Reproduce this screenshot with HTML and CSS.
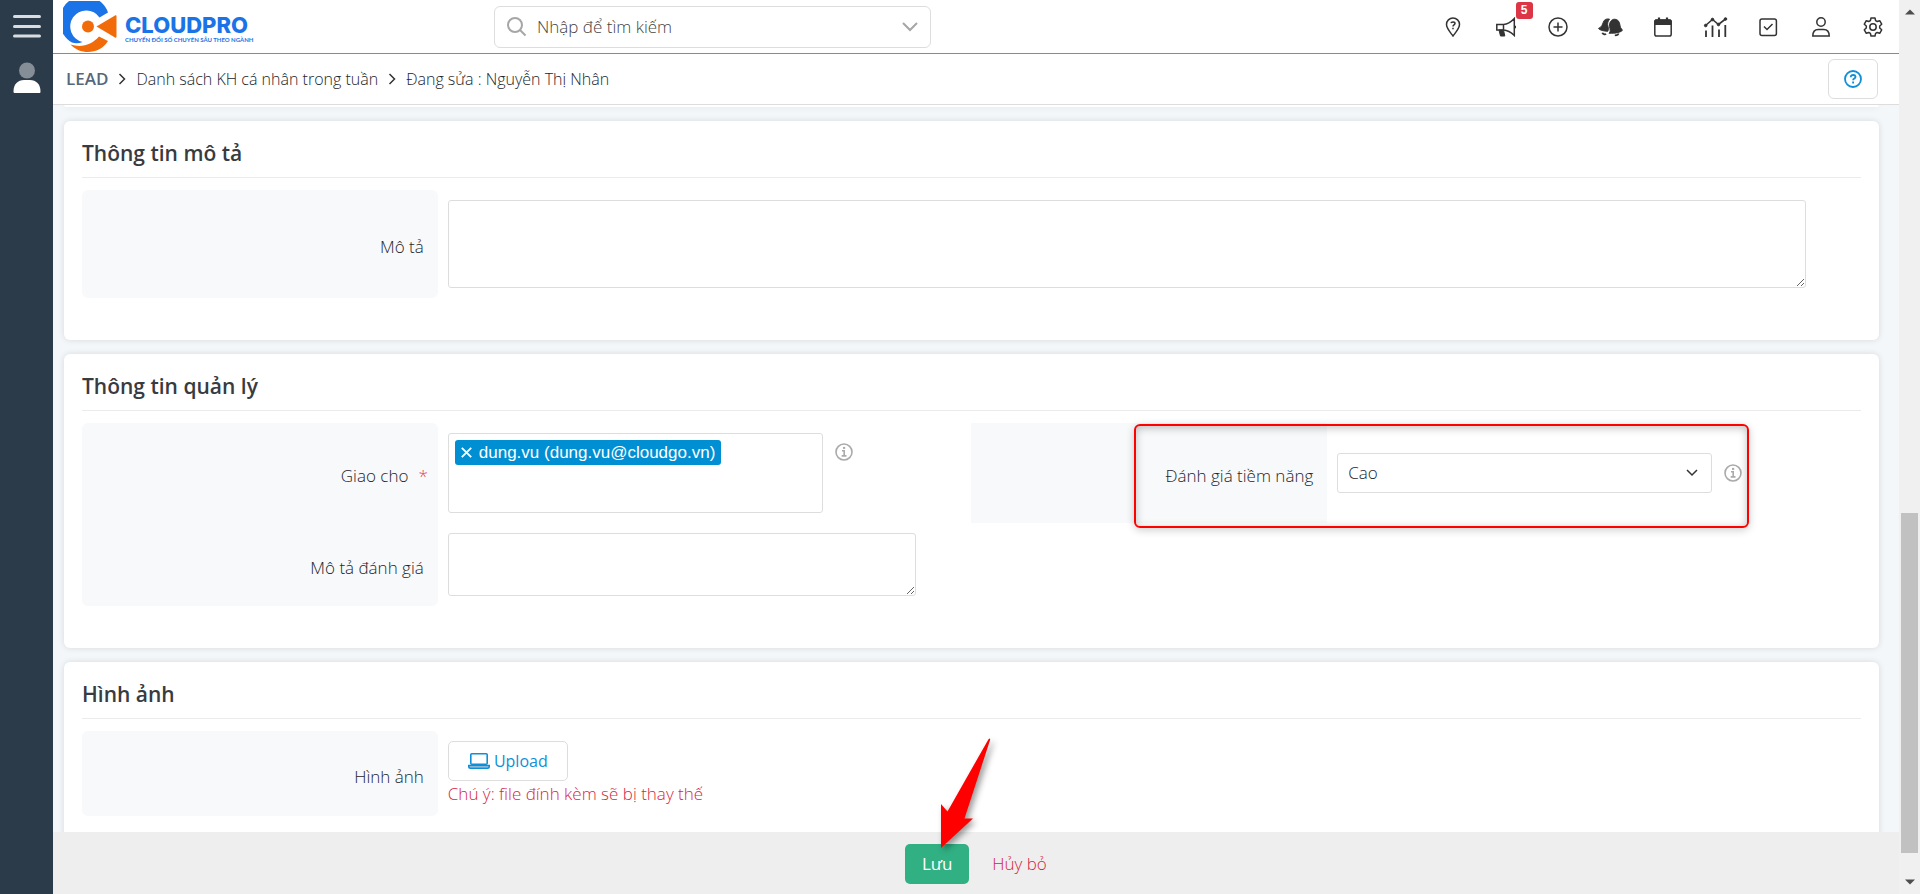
FILE: index.html
```html
<!DOCTYPE html>
<html lang="vi">
<head>
<meta charset="utf-8">
<title>Đang sửa : Nguyễn Thị Nhân</title>
<link rel="stylesheet" href="styles.css">
</head>
<body>
<div class="app">
  <nav class="sidebar" aria-label="Menu">
    <button class="side-btn" aria-label="Menu">
      <svg width="28" height="24" viewBox="0 0 28 24" fill="none" stroke="#d9dce0" stroke-width="3" stroke-linecap="round"><path d="M1.500 2.500h25M1.500 12.500h25M1.500 22h25"/></svg>
    </button>
    <button class="side-btn" aria-label="Tài khoản">
      <svg width="28" height="32" viewBox="0 0 28 32"><circle cx="14" cy="8.500" r="8" fill="#858d96"/><path d="M.500 29.500C.500 22 5 18 11 18h6c6 0 10.500 4 10.500 11.500 0 1-.500 1.500-1.500 1.500H2c-1 0-1.500-.500-1.500-1.500z" fill="#fff"/></svg>
    </button>
  </nav>

  <div class="page">
    <header class="topbar">
      <a class="logo" href="#" aria-label="CloudPro">
        <svg width="54" height="52" viewBox="0 0 54 52">
          <path d="M45 11.500A25 25 0 1 0 9 41.500c3.500 1.200 7 1 10.500-.500A16 16 0 1 1 36.500 16.500z" fill="#1a74e8"/>
          <path d="M7.500 43.500c11 3.500 21 .500 28.500-8l9 4.500C37 53.500 17.500 54.500 7.500 43.500z" fill="#f26b0b"/>
          <circle cx="25" cy="25.500" r="6" fill="#f26b0b"/>
          <path d="M33.500 25.500 52 14.500c1-.500 1.500 0 1.500 1v20c0 1-.500 1.500-1.500 1z" fill="#f26b0b"/>
        </svg>
        <span class="logo-text"><b class="logo-name">CLOUDPRO</b><span class="logo-sub">CHUYỂN ĐỔI SỐ CHUYÊN SÂU THEO NGÀNH</span></span>
      </a>
      <div class="search">
        <svg width="20" height="20" viewBox="0 0 20 20" fill="none" stroke="#a6a6a6" stroke-width="2"><circle cx="8" cy="8" r="7"/><path d="M13 13l5.500 5.500"/></svg>
        <input class="search-input" type="text" placeholder="Nhập để tìm kiếm" aria-label="Tìm kiếm">
        <button class="plain" aria-label="Mở rộng"><svg width="16" height="10" viewBox="0 0 16 10" fill="none" stroke="#a6a6a6" stroke-width="2"><path d="M1 1l7 7 7-7"/></svg></button>
      </div>
      <div class="tools">
        <button class="tool" aria-label="Vị trí"><svg viewBox="0 0 20 20" class="ico"><path d="M10 19C7 15 3.500 11.200 3.500 7.500a6.500 6.500 0 0 1 13 0C16.500 11.200 13 15 10 19z"/><path d="M8 6.200C8.200 4.500 12 4.300 12 6.500c0 1.400-2 1.300-2 2.900M10 10.800v1.500"/></svg></button>
        <button class="tool" aria-label="Thông báo"><svg viewBox="0 0 20 20" class="ico"><path d="M.800 7.500h6.700v5.500H.800zM7.500 7.500C11.500 7.300 15 5 18.300 1.500v17C15 15.300 11.500 13.200 7.500 13z"/><path d="M19 8.800v2.500" stroke-width="2"/><path d="M3 13h4.500l1.300 6H4.500z" class="solid"/></svg><span class="badge">5</span></button>
        <button class="tool" aria-label="Thêm"><svg viewBox="0 0 20 20" class="ico"><circle cx="10" cy="10" r="9"/><path d="M10 5.500v9M5.500 10h9"/></svg></button>
        <button class="tool" aria-label="Chuông"><svg viewBox="0 0 26 20" class="ico wide"><path d="M.500 11.500c3.500-1.500 4-4 5-6.500C6.500 2 9 1.200 12 1.800c-2 2.700-2.500 5-1.500 7.700.500 2 .500 2.700-.3 5C6 14.200 2 13.500.500 11.500z" class="solid"/><path d="M11.500 16.500c2-1.500 1-4 .5-7-.5-4 1.500-7.300 5-7.600 3.500-.2 5.200 2.500 5.700 5.300.4 2.500.5 4 2.800 5.800-1 2.500-7 3.700-14 3.500z" class="solid"/><path d="M4.500 16c.5 1.500 2.500 2 4 1.300M17.500 18.500c2 .3 3.500-.2 4-1.700" stroke-width="1.800"/></svg></button>
        <button class="tool" aria-label="Lịch"><svg viewBox="0 0 20 20" class="ico"><rect x="1.800" y="3" width="16.400" height="16" rx="1.800"/><path d="M2 3h16v4.500H2z" class="solid"/><path d="M6 .500v3M14 .500v3" stroke-width="2.200"/></svg></button>
        <button class="tool" aria-label="Báo cáo"><svg viewBox="0 0 24 20" class="ico wide"><path d="M2 8.500l7-6 6 5 7-5.500" stroke-width="1.600"/><g class="solid"><circle cx="2.200" cy="8.500" r="1.300"/><circle cx="9" cy="2.500" r="1.300"/><circle cx="15" cy="7.500" r="1.300"/><circle cx="22" cy="2" r="1.300"/></g><path d="M2.500 13.500V20M9 8.500V20M15.500 12.500V20M21.800 8V20" stroke-width="1.800"/></svg></button>
        <button class="tool" aria-label="Công việc"><svg viewBox="0 0 20 20" class="ico"><rect x="2" y="2" width="16.400" height="16.400" rx="2"/><path d="M6 9.500l3 3 5.500-5.500"/></svg></button>
        <button class="tool" aria-label="Người dùng"><svg viewBox="0 0 20 20" class="ico"><circle cx="10" cy="5" r="4.200"/><path d="M1.800 19c0-4.500 2.500-6.500 5.500-6.500h5.400c3 0 5.500 2 5.500 6.500z"/></svg></button>
        <button class="tool" aria-label="Cài đặt"><svg viewBox="0 0 20 20" class="ico"><circle cx="10" cy="10" r="3.200"/><path d="M8 1h4l.6 2.600 1.600.9 2.500-.8 2 3.500-2 1.800v2l2 1.800-2 3.500-2.500-.8-1.600.9L12 19H8l-.6-2.600-1.600-.9-2.500.8-2-3.500 2-1.800V9l-2-1.800 2-3.500 2.500.8 1.600-.9z" stroke-linejoin="round"/></svg></button>
      </div>
    </header>

    <div class="crumbbar">
      <nav class="crumbs" aria-label="Breadcrumb">
        <a class="crumb-module" href="#">LEAD</a>
        <svg class="sep" viewBox="0 0 8 12"><path d="M1.500 1l5 5-5 5"/></svg>
        <a class="crumb" href="#">Danh sách KH cá nhân trong tuần</a>
        <svg class="sep" viewBox="0 0 8 12"><path d="M1.500 1l5 5-5 5"/></svg>
        <span class="crumb">Đang sửa : Nguyễn Thị Nhân</span>
      </nav>
      <button class="help" aria-label="Trợ giúp"><svg width="18" height="18" viewBox="0 0 18 18" fill="none" stroke="#0f8fd6" stroke-width="1.800"><circle cx="9" cy="9" r="8"/><path d="M6.700 7.300c0-3.200 4.800-2.900 4.800-.3 0 1.600-2.400 1.600-2.400 3.200M9.100 11.600v1.800"/></svg></button>
    </div>

    <main class="content">
      <section class="card card-tail"></section>

      <section class="card">
        <h2 class="card-title">Thông tin mô tả</h2>
        <div class="row row-wide">
          <label class="label alone" for="desc">Mô tả</label>
          <div class="field"><textarea class="box area-lg" id="desc"></textarea></div>
        </div>
      </section>

      <section class="card">
        <h2 class="card-title">Thông tin quản lý</h2>
        <div class="row row-half">
          <label class="label first" for="owner">Giao cho <span class="req">*</span></label>
          <div class="field line">
            <div class="box tags">
              <span class="tag"><button class="tag-x" aria-label="Xóa"><svg width="11" height="11" viewBox="0 0 11 11" stroke="#fff" stroke-width="1.800"><path d="M.800.800l9.400 9.400M10.200.800L.800 10.200"/></svg></button>dung.vu (dung.vu@cloudgo.vn)</span>
              <input class="tag-input" id="owner" type="text">
            </div>
            <svg class="info" viewBox="0 0 18 18"><circle cx="9" cy="9" r="8"/><path d="M7 7.800h2.200v5M6.700 12.900h4.800"/><path d="M8 4.900h2.200" stroke-width="2"/></svg>
          </div>
          <label class="label" for="rating">Đánh giá tiềm năng</label>
          <div class="field line middle">
            <div class="select-wrap">
              <select class="box select" id="rating"><option>Cao</option></select>
              <svg class="select-arrow" width="12" height="8" viewBox="0 0 12 8"><path d="M1 1l5 5 5-5"/></svg>
            </div>
            <svg class="info" viewBox="0 0 18 18"><circle cx="9" cy="9" r="8"/><path d="M7 7.800h2.200v5M6.700 12.900h4.800"/><path d="M8 4.900h2.200" stroke-width="2"/></svg>
          </div>
          <label class="label last" for="note">Mô tả đánh giá</label>
          <div class="field"><textarea class="box area-sm" id="note"></textarea></div>
          <div class="highlight"></div>
        </div>
      </section>

      <section class="card">
        <h2 class="card-title">Hình ảnh</h2>
        <div class="row row-wide">
          <span class="label alone">Hình ảnh</span>
          <div class="field">
            <button class="upload"><svg width="22" height="16" viewBox="0 0 22 16" fill="none" stroke="#0f8fd6" stroke-width="1.600"><rect x="2.800" y=".800" width="16.400" height="10.500" rx="1"/><path d="M.800 12.500h20.400v1c0 1-.800 1.700-1.800 1.700H2.600c-1 0-1.800-.700-1.800-1.700z" fill="#b5c7d6"/></svg>Upload</button>
            <p class="note">Chú ý: file đính kèm sẽ bị thay thế</p>
          </div>
        </div>
      </section>
    </main>

    <footer class="actions">
      <div class="save-wrap">
        <button class="save">Lưu</button>
        <svg class="arrow" width="50" height="112" viewBox="0 0 50 112"><path d="M49.500.500c.8 0 .8.800.5 1.800L24.500 80.500H33L1 110V66l6.500 7.500L48.500 1.200z" fill="#f00"/></svg>
      </div>
      <a class="cancel" href="#">Hủy bỏ</a>
    </footer>
  </div>

  <div class="scroll" aria-hidden="true">
    <svg width="10" height="6" viewBox="0 0 10 6"><path d="M0 5.500L5 .500l5 5z" fill="#4d4d4d"/></svg>
    <div class="track"><div class="thumb"></div></div>
    <svg width="10" height="6" viewBox="0 0 10 6"><path d="M0 .500l5 5 5-5z" fill="#4d4d4d"/></svg>
  </div>
</div>
</body>
</html>
```
FILE: styles.css
```css
* { box-sizing: border-box; }
body {
  margin: 0;
  font-family: "Open Sans", "Noto Sans", sans-serif;
  font-size: 17px;
  line-height: 24px;
  font-weight: 300;
  color: #22262c;
}
button { border: 0; background: none; padding: 0; font: inherit; color: inherit; cursor: pointer; }
a { color: inherit; text-decoration: none; }
svg { display: block; flex: none; }

.app { display: flex; height: 100vh; overflow: hidden; background: #f3f7fa; }

.sidebar { flex: none; width: 53px; padding-top: 14px; background: #2c3b49; display: flex; flex-direction: column; align-items: center; gap: 24px; }
.page { flex: 1; min-width: 0; display: flex; flex-direction: column; }

.topbar { flex: none; display: flex; align-items: center; height: 54px; padding: 0 16px 0 10px; background: #fff; border-bottom: 1px solid #44b07c; }
.logo { display: flex; align-items: center; gap: 8px; width: 431px; color: #1a74e8; }
.logo-text { display: flex; flex-direction: column; padding-top: 6px; }
.logo-name { font-family: Inter, sans-serif; font-size: 22px; line-height: 20px; font-weight: 800; }
.logo-sub { font-family: Lato, sans-serif; font-size: 6px; line-height: 10px; font-weight: 700; white-space: nowrap; }
.search { display: flex; align-items: center; gap: 10px; width: 437px; height: 42px; padding: 0 12px; border: 1px solid #ddd; border-radius: 6px; }
.search-input { flex: 1; min-width: 0; padding: 0; border: 0; outline: 0; font: inherit; background: none; }
.search-input::placeholder { color: #444; }
.tools { display: flex; justify-content: space-between; width: 440px; margin-left: auto; }
.tool { position: relative; display: flex; justify-content: center; width: 20px; height: 20px; }
.ico { width: 20px; height: 20px; fill: none; stroke: #333; stroke-width: 1.5; }
.ico.wide { width: 25px; }
.ico .solid { fill: #333; stroke-width: 1; }
.badge { position: absolute; left: 20px; top: -15px; width: 17px; height: 17px; border-radius: 3px; background: #dc3545; color: #fff; font: 700 12px/16px "Liberation Sans", sans-serif; text-align: center; }

.crumbbar { flex: none; display: flex; align-items: center; justify-content: space-between; height: 51px; padding: 0 21px 0 13px; background: #fff; border-bottom: 1px solid #ddd; }
.crumbs { display: flex; align-items: center; gap: 10px; }
.crumb-module { font-size: 17px; font-weight: 600; color: #56677a; }
.crumb { font-size: 16px; }
.sep { width: 8px; height: 12px; fill: none; stroke: #333; stroke-width: 1.5; }
.help { display: flex; align-items: center; justify-content: center; width: 50px; height: 40px; border: 1px solid #ddd; border-radius: 6px; }

.content { flex: 1; min-height: 0; overflow: hidden; display: flex; flex-direction: column; gap: 14px; padding: 0 20px 0 11px; }
.card { flex: none; padding: 16px 18px 42px; background: #fff; border-radius: 6px; box-shadow: 0 0 6px rgba(0, 0, 0, .12); }
.card-tail { height: 2px; padding: 0; border-radius: 0 0 6px 6px; }
.card-title { margin: 0 0 12px; padding-bottom: 8px; border-bottom: 1px solid #ebebeb; font-size: 21px; line-height: 32px; font-weight: 600; color: #383b40; }

.row { display: grid; position: relative; }
.row-wide { grid-template-columns: 20% 80%; }
.row-half { grid-template-columns: 20% 30% 20% 30%; }
.label { display: flex; align-items: center; justify-content: flex-end; padding: 6px 14px 0 0; background: #f8f9fb; }
.label.alone { border-radius: 6px; }
.label.first { border-radius: 6px 6px 0 0; padding-right: 10px; }
.label.last { border-radius: 0 0 6px 6px; }
.req { margin-left: 10px; color: #e04358; }
.field { padding: 10px; }
.line { display: flex; align-items: flex-start; gap: 12px; }
.line.middle { align-items: center; }
.line:not(.middle) .info { margin-top: 10px; }
.info { width: 18px; height: 18px; fill: none; stroke: #aaa; stroke-width: 1.6; }

.box { display: block; border: 1px solid #ddd; border-radius: 3px; background: #fff; font: inherit; color: inherit; outline: 0; resize: none; }
textarea.box { width: calc(100% - 45px); resize: vertical; }
.area-lg { height: 88px; }
.area-sm { height: 63px; }
.tags { width: 375px; height: 80px; padding: 6px; }
.tag { display: flex; align-items: center; gap: 7px; width: fit-content; height: 25px; padding: 0 6px; border-radius: 3px; background: #008fd3; color: #fff; font: 400 17px/25px "Liberation Sans", sans-serif; white-space: nowrap; }
.tag-input { width: 100%; border: 0; outline: 0; padding: 0; }
.select-wrap { position: relative; width: 375px; }
.select { width: 100%; height: 40px; padding: 0 10px; appearance: none; }
.select-arrow { position: absolute; right: 14px; top: 16px; fill: none; stroke: #333; stroke-width: 1.5; pointer-events: none; }
.highlight { position: absolute; left: calc(50% + 162px); top: 1px; width: 615px; height: 104px; border: 2px solid #f00; border-radius: 6px; box-shadow: 0 2px 8px rgba(0, 0, 0, .2), inset 0 2px 8px rgba(0, 0, 0, .25); pointer-events: none; }

.upload { display: flex; align-items: center; justify-content: center; gap: 4px; width: 120px; height: 40px; border: 1px solid #ddd; border-radius: 5px; color: #0f8fd6; font-size: 16px; font-weight: 400; }
.note { margin: 1px 0 0; color: #d61f3d; }

.actions { flex: none; display: flex; align-items: center; justify-content: center; gap: 23px; height: 62px; padding-top: 2px; background: #eee; }
.save-wrap { position: relative; }
.save { display: block; width: 64px; height: 40px; border-radius: 5px; background: #31b084; color: #fff; font-weight: 400; }
.arrow { position: absolute; left: 35px; top: -106px; filter: drop-shadow(3px 3px 3px rgba(0, 0, 0, .4)); overflow: visible; pointer-events: none; }
.cancel { color: #d61f3d; }

.scroll { flex: none; width: 21px; padding: 9px 2px; background: #f0f0f0; display: flex; flex-direction: column; align-items: center; gap: 9px; }
.track { flex: 1; width: 17px; display: flex; flex-direction: column; justify-content: flex-end; padding-bottom: 17px; }
.thumb { height: 41%; background: #c1c1c1; }
```
